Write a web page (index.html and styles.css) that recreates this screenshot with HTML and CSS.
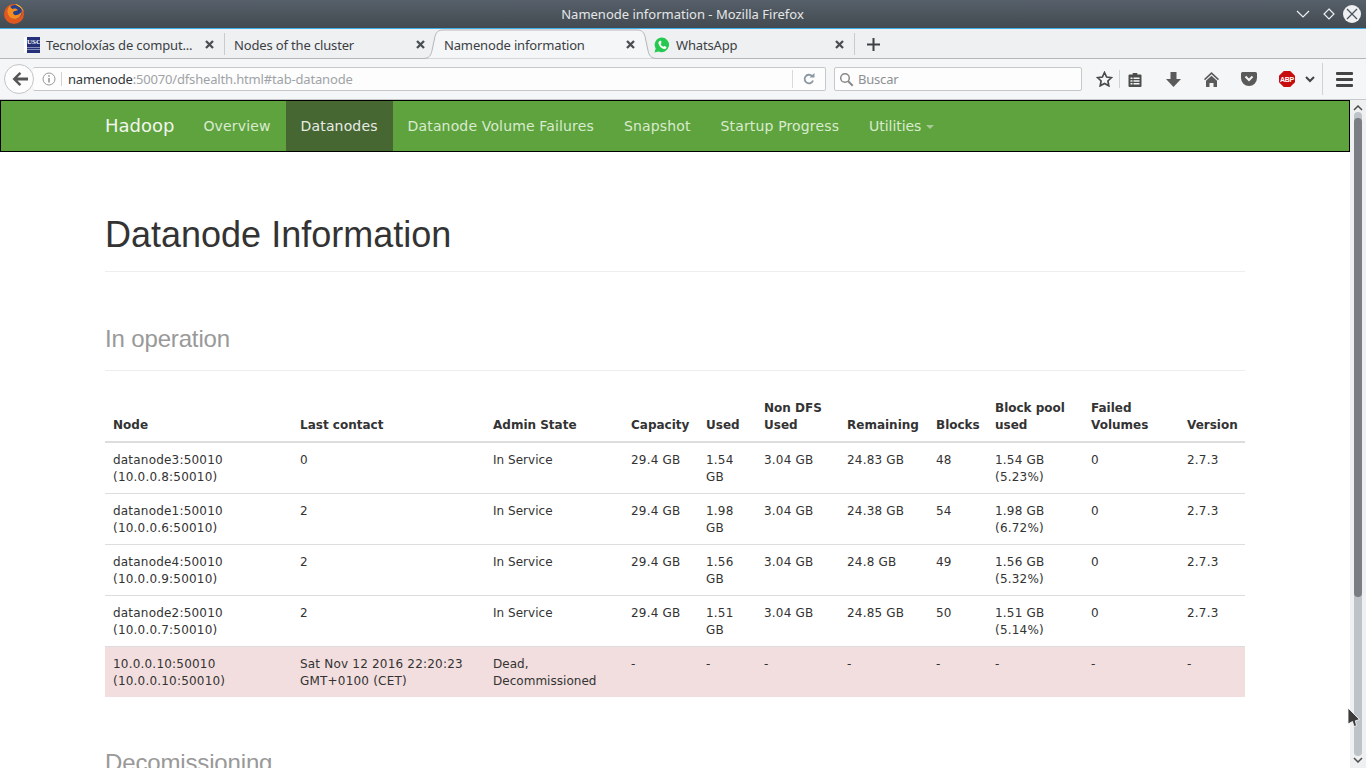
FILE: index.html
```html
<!DOCTYPE html>
<html lang="en">
<head>
  <meta charset="UTF-8">
  <title>Namenode information - Mozilla Firefox</title>
  <link rel="stylesheet" href="styles.css">
</head>
<body>
  <header class="titlebar">
    <svg class="ff-logo" width="22" height="22" viewBox="0 0 22 22">
      <circle cx="11" cy="11" r="10" fill="#e2571e"/>
      <circle cx="12" cy="9" r="7" fill="#26408f"/>
      <path d="M10 6c2-1 4 0 5 1-1 1-4 .5-5 2.500 0 2 2 3 4 2.500 2-.5 4-2 4.500-4 .5 4-2.500 8-6.500 8-4.500 0-7.500-3.500-7.500-7.500 0-2.500 1-4.500 2.500-6 0 1.500 1 2.500 2.500 3.500z" fill="#f68b1f"/>
      <path d="M12 1c4.500.5 8 4 9 8.500-1-2.500-3-5-5.500-6-1-.6-2-1.500-3.500-2.500z" fill="#fcc32c"/>
    </svg>
    <div class="window-title">Namenode information - Mozilla Firefox</div>
    <div class="window-btns">
      <svg class="btn-min" width="14" height="8" viewBox="0 0 14 8"><path d="M1 1l6 6 6-6" fill="none" stroke="#eff0f1" stroke-width="1.200"/></svg>
      <svg width="12" height="12" viewBox="0 0 12 12"><path d="M6 1l5 5-5 5-5-5z" fill="none" stroke="#eff0f1" stroke-width="1.200"/></svg>
      <span class="close-btn">
        <svg width="12" height="12" viewBox="0 0 12 12"><path d="M1 1l10 10M11 1L1 11" stroke="#4d555c" stroke-width="1.300"/></svg>
      </span>
    </div>
  </header>

  <nav class="tabstrip">
    <div class="tab tab-first">
      <span class="usc-icon"><span class="usc-text">USC</span></span>
      <span class="tab-label">Tecnoloxías de comput...</span>
      <svg class="tab-x" width="9" height="9" viewBox="0 0 9 9"><path d="M1 1l7 7M8 1L1 8" stroke="#4a4e52" stroke-width="2.300"/></svg>
    </div>
    <div class="tab-sep"></div>
    <div class="tab tab-second">
      <span class="tab-label">Nodes of the cluster</span>
      <svg class="tab-x" width="9" height="9" viewBox="0 0 9 9"><path d="M1 1l7 7M8 1L1 8" stroke="#4a4e52" stroke-width="2.300"/></svg>
    </div>
    <div class="tab tab-active">
      <svg class="tab-shape" width="234" height="30" viewBox="0 0 234 30">
        <path d="M0 29.500c6 0 8-3 9-8l3-14c1-4 3-6.500 8-6.500h194c5 0 7 2.500 8 6.500l3 14c1 5 3 8 9 8" fill="#f5f6f7" stroke="#b4b6b9"/>
      </svg>
      <span class="tab-label">Namenode information</span>
      <svg class="tab-x" width="9" height="9" viewBox="0 0 9 9"><path d="M1 1l7 7M8 1L1 8" stroke="#4a4e52" stroke-width="2.300"/></svg>
    </div>
    <div class="tab tab-whatsapp">
      <svg width="16" height="16" viewBox="0 0 16 16">
        <path d="M8 .500a7.300 7.300 0 0 0-6.300 11L.500 15.500l4.100-1.100A7.300 7.300 0 1 0 8 .500z" fill="#25c94f"/>
        <path d="M5.500 4c-.7.500-1.200 1.300-1 2.400.5 2.500 3 5 5.300 5.500 1.200.2 2-.2 2.500-1 .2-.4.200-.8 0-1L10.600 9c-.3-.1-.5 0-.7.200l-.5.600c-1.200-.4-2.400-1.600-2.800-2.800l.6-.6c.2-.2.200-.4.100-.7L7.400 4.200C7 3.800 6 3.700 5.500 4z" fill="#fff"/>
      </svg>
      <span class="tab-label">WhatsApp</span>
      <svg class="tab-x" width="9" height="9" viewBox="0 0 9 9"><path d="M1 1l7 7M8 1L1 8" stroke="#4a4e52" stroke-width="2.300"/></svg>
    </div>
    <div class="tab-sep"></div>
    <svg class="tab-plus" width="13" height="13" viewBox="0 0 13 13"><path d="M6.500 0v13M0 6.500h13" stroke="#3d4145" stroke-width="2"/></svg>
  </nav>

  <div class="toolbar">
    <span class="back-btn">
      <svg class="back-arrow" width="16" height="14" viewBox="0 0 16 14"><path d="M7.500 0L.500 7l7 7 1.800-1.800L5.400 8.500H16v-3H5.400l3.900-3.700z" fill="#555"/></svg>
    </span>
    <div class="urlbar">
      <svg class="info-icon" width="14" height="14" viewBox="0 0 14 14"><circle cx="7" cy="7" r="6" fill="none" stroke="#999"/><path d="M7 6v4.500M7 3.200v1.500" stroke="#888" stroke-width="1.400"/></svg>
      <span class="url-text"><span class="url-host">namenode</span>:50070/dfshealth.html#tab-datanode</span>
      <span class="url-reload">
        <svg width="12" height="12" viewBox="0 0 12 12"><path d="M10 7.500A4.300 4.300 0 1 1 9 3" fill="none" stroke="#8a97a3" stroke-width="1.800"/><path d="M6.500 4.500h5V0z" fill="#8a97a3"/></svg>
      </span>
    </div>
    <div class="searchbar">
      <svg width="15" height="15" viewBox="0 0 15 15"><circle cx="6" cy="6" r="4.300" fill="none" stroke="#888" stroke-width="1.500"/><path d="M9.200 9.200l4.500 4.500" stroke="#888" stroke-width="2"/></svg>
      <span class="search-text">Buscar</span>
    </div>
    <div class="tool-icons">
      <svg class="ic-star" width="17" height="16" viewBox="0 0 17 16"><path d="M8.500 1.500l2.100 4.500 4.900.6-3.600 3.400.9 4.800-4.300-2.400-4.300 2.400.9-4.800L1.500 6.600l4.900-.6z" fill="none" stroke="#4a4a4a" stroke-width="1.700"/></svg>
      <span class="tool-sep"></span>
      <svg class="ic-list" width="14" height="15" viewBox="0 0 14 15"><path d="M1.500 2.500h3.200V1h4.600v1.500h3.200a1 1 0 0 1 1 1V14a1 1 0 0 1-1 1h-11a1 1 0 0 1-1-1V3.500a1 1 0 0 1 1-1z" fill="#4d4d4d"/><path d="M2.500 5.500h2v1.500h-2zM5.500 5.500h6v1.500h-6zM2.500 8.200h2v1.500h-2zM5.500 8.200h6v1.500h-6zM2.500 11h2v1.500h-2zM5.500 11h6v1.500h-6z" fill="#f5f6f7"/></svg>
      <svg class="ic-down" width="15" height="15" viewBox="0 0 15 15"><path d="M4.500 0h6v7H15l-7.500 8L0 7h4.500z" fill="#5a5a5a"/></svg>
      <svg class="ic-home" width="15" height="15" viewBox="0 0 15 15"><path d="M7.500 0L15 7l-1 1.200-6.500-6-6.500 6L0 7z" fill="#5a5a5a"/><path d="M7.500 3.800L13 8.800V15H9.500v-4h-4v4H2V8.800z" fill="#5a5a5a"/></svg>
      <svg class="ic-pocket" width="16" height="14" viewBox="0 0 16 14"><path d="M1.500 0h13A1.500 1.500 0 0 1 16 1.500V6a8 8 0 0 1-16 0V1.500A1.500 1.500 0 0 1 1.500 0z" fill="#5a5a5a"/><path d="M4.500 4.500L8 8l3.500-3.500" fill="none" stroke="#f5f6f7" stroke-width="2"/></svg>
      <span class="abp"><span class="abp-text">ABP</span></span>
      <svg class="ic-chev" width="10" height="7" viewBox="0 0 10 7"><path d="M1 1l4 4 4-4" fill="none" stroke="#444" stroke-width="2"/></svg>
      <span class="tool-sep tool-sep-tall"></span>
      <span class="hamburger"><i></i><i></i><i></i></span>
    </div>
  </div>

  <div class="viewport">
    <main class="page">
      <div class="navbar">
        <div class="nav-inner">
          <a class="brand">Hadoop</a>
          <a class="nav-link">Overview</a>
          <a class="nav-link nav-current">Datanodes</a>
          <a class="nav-link">Datanode Volume Failures</a>
          <a class="nav-link">Snapshot</a>
          <a class="nav-link">Startup Progress</a>
          <a class="nav-link nav-utilities">Utilities <span class="caret"></span></a>
        </div>
      </div>

      <div class="container">
        <div class="page-header"><h1>Datanode Information</h1></div>
        <div class="page-header sub-header"><h2>In operation</h2></div>

        <table class="dn-table">
          <colgroup>
            <col class="c1"><col class="c2"><col class="c3"><col class="c4"><col class="c5"><col class="c6">
            <col class="c7"><col class="c8"><col class="c9"><col class="c10"><col class="c11">
          </colgroup>
          <thead>
            <tr>
              <th>Node</th><th>Last contact</th><th>Admin State</th><th>Capacity</th><th>Used</th><th>Non DFS Used</th>
              <th>Remaining</th><th>Blocks</th><th>Block pool used</th><th>Failed Volumes</th><th>Version</th>
            </tr>
          </thead>
          <tbody>
            <tr>
              <td>datanode3:50010 (10.0.0.8:50010)</td><td>0</td><td class="state">In Service</td><td>29.4 GB</td><td>1.54 GB</td><td>3.04 GB</td>
              <td>24.83 GB</td><td>48</td><td>1.54 GB (5.23%)</td><td>0</td><td>2.7.3</td>
            </tr>
            <tr>
              <td>datanode1:50010 (10.0.0.6:50010)</td><td>2</td><td class="state">In Service</td><td>29.4 GB</td><td>1.98 GB</td><td>3.04 GB</td>
              <td>24.38 GB</td><td>54</td><td>1.98 GB (6.72%)</td><td>0</td><td>2.7.3</td>
            </tr>
            <tr>
              <td>datanode4:50010 (10.0.0.9:50010)</td><td>2</td><td class="state">In Service</td><td>29.4 GB</td><td>1.56 GB</td><td>3.04 GB</td>
              <td>24.8 GB</td><td>49</td><td>1.56 GB (5.32%)</td><td>0</td><td>2.7.3</td>
            </tr>
            <tr>
              <td>datanode2:50010 (10.0.0.7:50010)</td><td>2</td><td class="state">In Service</td><td>29.4 GB</td><td>1.51 GB</td><td>3.04 GB</td>
              <td>24.85 GB</td><td>50</td><td>1.51 GB (5.14%)</td><td>0</td><td>2.7.3</td>
            </tr>
            <tr class="row-dead">
              <td>10.0.0.10:50010 (10.0.0.10:50010)</td><td>Sat Nov 12 2016 22:20:23 GMT+0100 (CET)</td><td class="state">Dead, Decommissioned</td><td>-</td><td>-</td><td>-</td>
              <td>-</td><td>-</td><td>-</td><td>-</td><td>-</td>
            </tr>
          </tbody>
        </table>

        <div class="next-header"><h2>Decomissioning</h2></div>
      </div>
    </main>

    <aside class="scrollbar">
      <svg class="sb-arrow" width="10" height="6" viewBox="0 0 10 6"><path d="M1 5l4-4 4 4" fill="none" stroke="#4d4d4d" stroke-width="1.500"/></svg>
      <div class="sb-track"><div class="sb-thumb"></div></div>
      <svg class="sb-arrow" width="10" height="6" viewBox="0 0 10 6"><path d="M1 1l4 4 4-4" fill="none" stroke="#4d4d4d" stroke-width="1.500"/></svg>
    </aside>

    <svg class="cursor" width="14" height="22" viewBox="0 0 14 22"><path d="M1 1v16l4.500-2.500 1.500 5 2.500-.8-1.200-4.900 4.200-1.300z" fill="#3c3c3c" stroke="#fff" stroke-width=".8"/></svg>
  </div>
</body>
</html>
```

FILE: styles.css
```css
html, body {
  margin: 0;
  height: 768px;
  overflow: hidden;
}
body {
  display: flex;
  flex-direction: column;
  font-family: "Noto Sans", sans-serif;
  font-size: 13px;
  background-color: #fff;
}

/* window title */
.titlebar {
  flex: 0 0 28px;
  display: flex;
  align-items: center;
  padding: 0 5px 0 3px;
  background: linear-gradient(#56606a, #434a50);
  color: #eff0f1;
  border-bottom: 1px solid #3daee9;
}
.ff-logo {
  flex: none;
}
.window-title {
  flex: 1;
  text-align: center;
  padding-left: 44px;
  color: #e4e6e7;
  font-size: 13px;
}
.window-btns {
  display: flex;
  align-items: center;
  gap: 8px;
}
.btn-min {
  margin-right: 5px;
}
.close-btn {
  width: 18px;
  height: 18px;
  border-radius: 50%;
  background-color: #eff0f1;
  display: flex;
  align-items: center;
  justify-content: center;
}

/* tabs */
.tabstrip {
  flex: 0 0 30px;
  display: flex;
  align-items: center;
  background-color: #eff0f2;
  border-bottom: 1px solid #b4b6b9;
  padding-left: 24px;
  box-sizing: border-box;
  color: #3b3f44;
}
.tab {
  height: 29px;
  display: flex;
  align-items: center;
  position: relative;
  box-sizing: border-box;
  padding-top: 2px;
  letter-spacing: -.15px;
}
.tab-label {
  flex: 1;
  white-space: nowrap;
  position: relative;
}
.tab-x {
  flex: none;
  position: relative;
}
.tab-first {
  width: 190px;
  gap: 6px;
}
.tab-second {
  width: 200px;
  padding-left: 9px;
}
.tab-active {
  width: 210px;
  padding-left: 19px;
}
.tab-shape {
  position: absolute;
  left: -2px;
  top: 0;
}
.tab-whatsapp {
  width: 190px;
  margin-left: 19px;
  gap: 6px;
}
.tab-sep {
  width: 1px;
  height: 22px;
  background-color: #c9cbce;
  margin-left: 10px;
}
.tab-plus {
  margin: 2px 0 0 12px;
}
.usc-icon {
  width: 16px;
  height: 16px;
  background: linear-gradient(#24317a 0 10px, #8a90b5 10px 11px, #24317a 11px 12px, #8a90b5 12px 13px, #24317a 13px);
  display: block;
  overflow: hidden;
  flex: none;
  border-left: 3px solid #fff;
  box-sizing: border-box;
}
.usc-text {
  display: block;
  color: #fff;
  font: bold 7px/10px "Liberation Serif", serif;
  letter-spacing: 0;
}

/* url row */
.toolbar {
  flex: 0 0 41px;
  box-sizing: border-box;
  display: flex;
  align-items: center;
  padding-left: 4px;
  background-color: #f5f6f7;
  border-bottom: 1px solid #c6c8ca;
  position: relative;
}
.back-btn {
  width: 30px;
  height: 30px;
  box-sizing: border-box;
  border: 1px solid #c3c5c7;
  border-radius: 50%;
  background-color: #fdfdfd;
  display: flex;
  align-items: center;
  justify-content: center;
  position: relative;
  z-index: 1;
  flex: none;
}
.back-arrow {
  margin-left: 2px;
}
.urlbar, .searchbar {
  height: 24px;
  box-sizing: border-box;
  border: 1px solid #c5c7c9;
  border-radius: 2px;
  background-color: #fdfdfd;
  display: flex;
  align-items: center;
}
.urlbar {
  width: 793px;
  margin-left: -1px;
  padding-left: 9px;
  border-left: 0;
}
.info-icon {
  padding-right: 5px;
  margin-right: 6px;
  border-right: 1px solid #d0d2d4;
}
.url-text {
  flex: 1;
  color: #a0a3a6;
  font-size: 13px;
  letter-spacing: -.17px;
}
.url-host {
  color: #33373b;
}
.url-reload {
  width: 32px;
  height: 18px;
  border-left: 1px solid #d8dadc;
  display: flex;
  align-items: center;
  justify-content: center;
}
.searchbar {
  width: 248px;
  margin-left: 8px;
  padding-left: 4px;
  gap: 4px;
}
.search-text {
  color: #8d9093;
  letter-spacing: -.2px;
}
.tool-icons {
  position: relative;
  display: flex;
  align-items: center;
  margin-left: 14px;
}
.ic-star { margin-right: 6px; }
.tool-sep {
  width: 1px;
  height: 18px;
  background-color: #d0d2d4;
}
.ic-list { margin-left: 8px; }
.ic-down { margin-left: 24px; }
.ic-home { margin-left: 23px; }
.ic-pocket { margin-left: 22px; }
.abp {
  width: 16px;
  height: 16px;
  margin-left: 22px;
  background-color: #c70d0d;
  clip-path: polygon(30% 0, 70% 0, 100% 30%, 100% 70%, 70% 100%, 30% 100%, 0 70%, 0 30%);
  display: flex;
  align-items: center;
  justify-content: center;
}
.abp-text {
  color: #fff;
  font: bold 7px/1 "Liberation Sans", sans-serif;
  letter-spacing: -.3px;
}
.ic-chev { margin-left: 10px; }
.tool-sep-tall {
  height: 32px;
  margin-left: 7px;
}
.hamburger {
  margin-left: 13px;
  display: flex;
  flex-direction: column;
  gap: 3px;
}
.hamburger i {
  display: block;
  width: 17px;
  height: 3px;
  border-radius: 1px;
  background-color: #444;
}

/* page */
.viewport {
  flex: 1;
  display: flex;
  min-height: 0;
  position: relative;
}
.page {
  flex: 1;
  min-width: 0;
  overflow: hidden;
  font-family: "DejaVu Sans", sans-serif;
  font-size: 12px;
  line-height: 17px;
  color: #333;
}
.navbar {
  height: 52px;
  box-sizing: border-box;
  background-color: #5fa33e;
  border: 1px solid #000;
}
.nav-inner {
  display: flex;
  height: 50px;
  padding-left: 104px;
}
.brand {
  color: #f1f6ee;
  font-size: 18px;
  line-height: 50px;
  padding-right: 14px;
}
.nav-link {
  color: #d9ebcf;
  font-size: 14px;
  line-height: 50px;
  padding: 0 15px;
  letter-spacing: .15px;
}
.nav-current {
  background-color: #466632;
  color: #e8ece5;
}
.nav-utilities {
  letter-spacing: -.05px;
}
.caret {
  display: inline-block;
  width: 0;
  height: 0;
  vertical-align: middle;
  border-top: 4px solid #a8c896;
  border-left: 4px solid transparent;
  border-right: 4px solid transparent;
}
.container {
  width: 1140px;
  margin-left: 105px;
}
.page-header {
  border-bottom: 1px solid #eee;
  font-family: "Liberation Sans", sans-serif;
}
h1 {
  margin: 0;
  padding: 63px 0 16px;
  font-size: 36px;
  font-weight: 400;
  line-height: 40px;
  color: #333;
}
h2 {
  margin: 0;
  font-family: "Liberation Sans", sans-serif;
  font-size: 24px;
  font-weight: 400;
  line-height: 26px;
  letter-spacing: -.15px;
  color: #999;
}
.sub-header {
  padding: 54px 0 18px;
  margin-bottom: 21px;
}
.next-header {
  padding-top: 53px;
}
.dn-table {
  width: 1140px;
  table-layout: fixed;
  border-collapse: collapse;
}
.c1 { width: 187px; }
.c2 { width: 193px; }
.c3 { width: 138px; }
.c4 { width: 75px; }
.c5 { width: 58px; }
.c6 { width: 83px; }
.c7 { width: 89px; }
.c8 { width: 59px; }
.c9 { width: 96px; }
.c10 { width: 96px; }
.c11 { width: 66px; }
.dn-table th {
  padding: 8px 8px 7px;
  text-align: left;
  vertical-align: bottom;
  font-weight: 700;
  border-bottom: 2px solid #ddd;
}
.dn-table td {
  padding: 9px 8px 7px;
  vertical-align: top;
  border-bottom: 1px solid #ddd;
  letter-spacing: .2px;
}
.dn-table .state {
  letter-spacing: .03px;
}
.row-dead td {
  background-color: #f2dede;
  border-bottom: 0;
}

/* scrollbar */
.scrollbar {
  flex: 0 0 16px;
  background-color: #eff0f1;
  display: flex;
  flex-direction: column;
  align-items: center;
  padding: 5px 0 5px;
  box-sizing: border-box;
  gap: 1px;
}
.sb-track {
  flex: 1;
  width: 8px;
  background-color: #bdc3c7;
  border-radius: 4px;
}
.sb-thumb {
  height: 479px;
  background-color: #7b7d84;
  border-radius: 4px;
  margin-top: 6px;
}
.cursor {
  position: absolute;
  left: 1347px;
  top: 607px;
}
```
